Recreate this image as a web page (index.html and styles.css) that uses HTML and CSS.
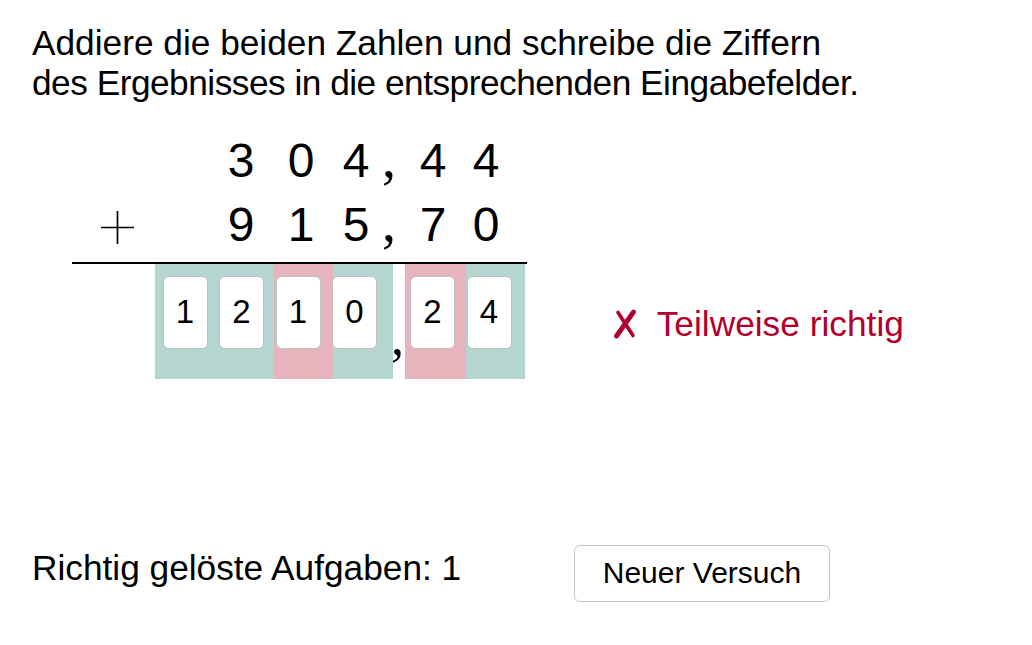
FILE: index.html
```html
<!DOCTYPE html>
<html lang="de">
<head>
<meta charset="utf-8">
<title>Addition</title>
<link rel="stylesheet" href="styles.css">
</head>
<body>
<main class="page">
  <p class="task"><span class="line">Addiere die beiden Zahlen und schreibe die Ziffern</span><br><span class="line tight">des Ergebnisses in die entsprechenden Eingabefelder.</span></p>
  <section class="work">
    <div class="sum">
      <div class="row">
        <span class="op"></span><span></span><span>3</span><span>0</span><span>4</span><span class="sep"><span class="comma">,</span></span><span>4</span><span>4</span><span></span>
      </div>
      <div class="row">
        <span class="op"><svg class="plus" width="33" height="33" viewBox="0 0 33 33"><path d="M16.5 0V33M0 16.5H33" stroke="#000" stroke-width="1.7" fill="none"/></svg></span><span></span><span>9</span><span>1</span><span>5</span><span class="sep"><span class="comma">,</span></span><span>7</span><span>0</span><span></span>
      </div>
      <div class="rule"></div>
      <div class="result">
        <div class="stripes">
          <span></span><span class="ok"></span><span class="ok"></span><span class="bad"></span><span class="ok"></span><span></span><span class="bad"></span><span class="ok"></span><span></span>
        </div>
        <div class="boxes">
          <span class="box">1</span><span class="box">2</span><span class="box">1</span><span class="box last">0</span><span class="dec"><span class="dec-mark">,</span></span><span class="box">2</span><span class="box">4</span>
        </div>
      </div>
    </div>
    <p class="feedback"><svg class="cross" width="24" height="30" viewBox="0 0 24 30"><path d="M5 3.5L20 26.5" stroke="#b0002b" stroke-width="3.6" stroke-linecap="round" fill="none"/><path d="M20.5 3L3.5 27" stroke="#b0002b" stroke-width="4.8" stroke-linecap="round" fill="none"/></svg><span>Teilweise richtig</span></p>
  </section>
  <footer class="footer">
    <span class="score">Richtig gelöste Aufgaben: 1</span>
    <button class="retry" type="button">Neuer Versuch</button>
  </footer>
</main>
</body>
</html>
```
FILE: styles.css
```css
html, body {
  margin: 0;
  padding: 0;
  background: #fff;
}

body {
  font-family: "Liberation Sans", Arial, sans-serif;
  color: #000;
}

.page {
  padding: 22.5px 0 0 32px;
}

.task {
  margin: 0;
  font-size: 35.25px;
  line-height: 40px;
}

.line.tight {
  letter-spacing: -0.5px;
}

.work {
  display: flex;
  align-items: flex-start;
  margin-top: 26.9px;
  margin-left: 40px;
}

.sum {
  width: 455px;
}

.row {
  display: grid;
  grid-template-columns: 90px 49px 60px 60px 50px 16px 72px 34px 24px;
  height: 64px;
  font-size: 48px;
  line-height: 64px;
  text-align: center;
}

.op {
  display: flex;
  justify-content: center;
  align-items: flex-start;
  padding-top: 18px;
}

.plus {
  display: block;
}

.comma {
  font-family: "Liberation Serif", "Times New Roman", serif;
  font-size: 56px;
  line-height: 0;
}

.rule {
  margin-top: 4.6px;
  height: 2px;
  background: #000;
}

.result {
  display: grid;
  height: 115px;
}

.result > * {
  grid-area: 1 / 1;
}

.stripes {
  display: grid;
  grid-template-columns: 83px 59px 60px 59px 60px 12px 61px 59px 2px;
}

.ok {
  background: #b4d5d0;
}

.bad {
  background: #e7b4bd;
}

.boxes {
  display: flex;
  align-items: flex-start;
  padding: 12px 0 0 90.5px;
}

.box {
  box-sizing: border-box;
  width: 45px;
  height: 73px;
  margin-right: 11.5px;
  display: flex;
  align-items: center;
  justify-content: center;
  background: #fff;
  border: 1.5px solid #c2c2c2;
  border-radius: 6px;
  font-size: 33px;
}

.box.last {
  margin-right: 0;
}

.dec {
  box-sizing: border-box;
  width: 33px;
  height: 73px;
  padding-left: 8px;
  display: flex;
  align-items: flex-end;
  justify-content: center;
}

.dec-mark {
  font-family: "Liberation Serif", "Times New Roman", serif;
  font-size: 52px;
  line-height: 1;
  margin-bottom: -14px;
}

.feedback {
  margin: 175px 0 0 86px;
  display: flex;
  align-items: center;
  gap: 19.7px;
  height: 40px;
  font-size: 35.3px;
  line-height: 40px;
  color: #b0002b;
  white-space: nowrap;
}

.cross {
  display: block;
}

.footer {
  display: grid;
  grid-template-columns: 542px auto;
  align-items: start;
  margin-top: 166px;
}

.score {
  margin-top: 2.8px;
  font-size: 35.25px;
  line-height: 40px;
}

.retry {
  justify-self: start;
  box-sizing: border-box;
  width: 256px;
  height: 57px;
  padding: 0;
  background: #fff;
  border: 1.5px solid #c4c4c4;
  border-radius: 6px;
  font-family: "Liberation Sans", Arial, sans-serif;
  font-size: 30px;
  color: #000;
}
```
